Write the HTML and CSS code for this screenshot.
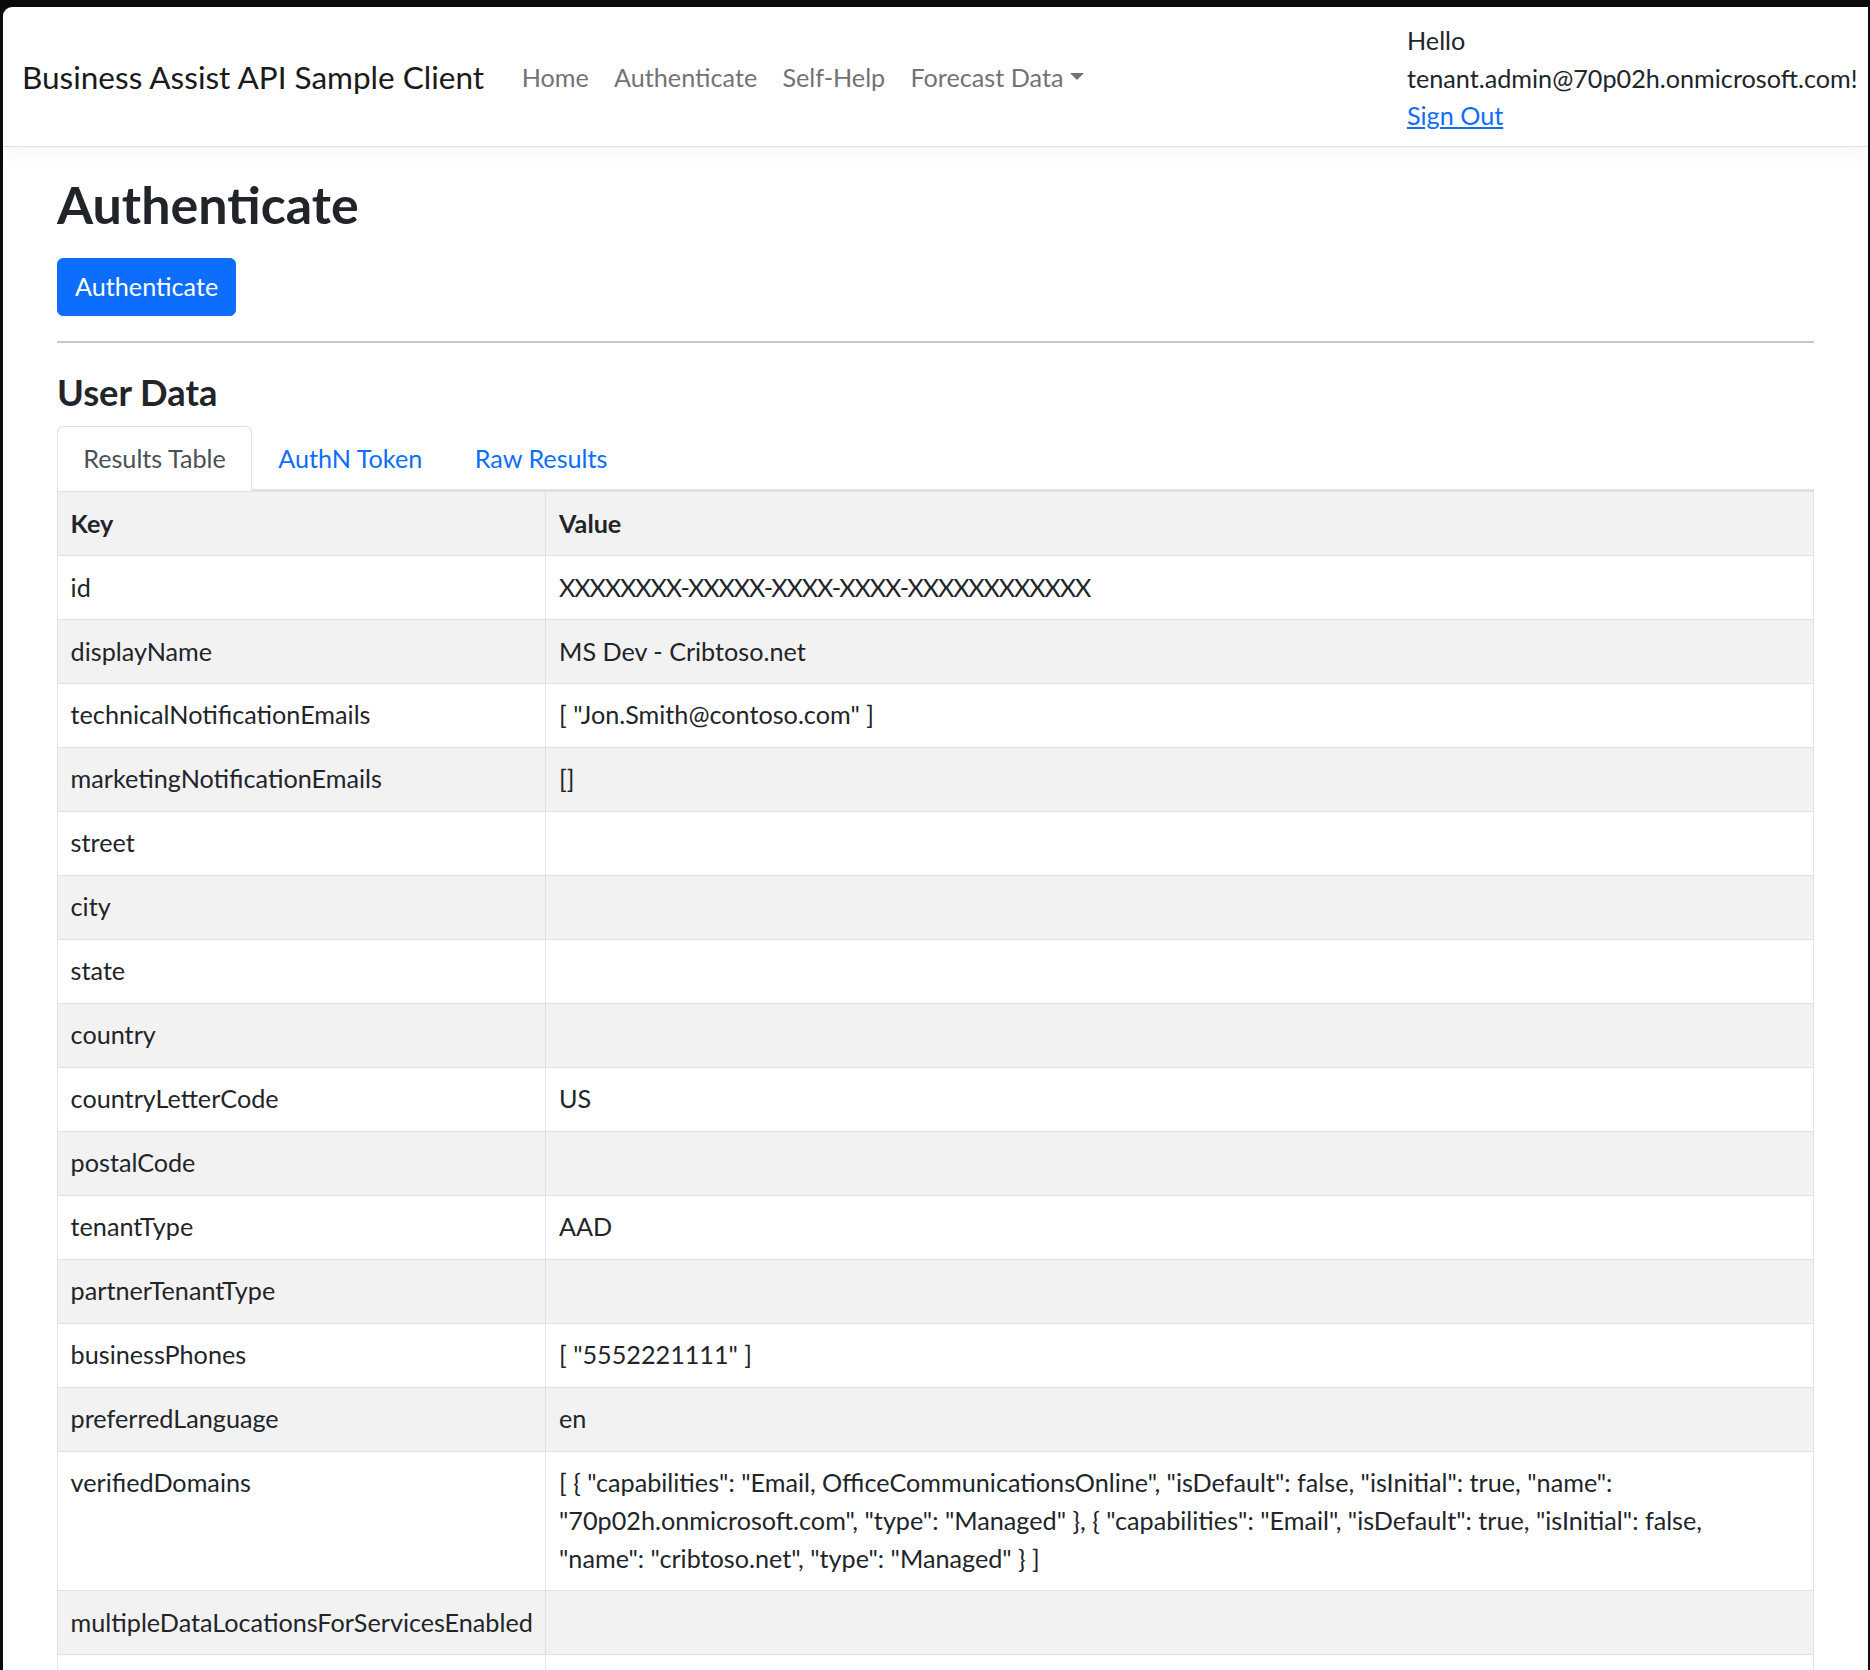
FILE: index.html
```html
<!DOCTYPE html>
<html lang="en">
<head>
<meta charset="utf-8">
<title>Authenticate - Business Assist API Sample Client</title>
<link rel="stylesheet" href="styles.css">
</head>
<body>
<div class="window">
  <header class="navbar">
    <a class="brand" href="#">Business Assist API Sample Client</a>
    <ul class="nav">
      <li><a class="nav-link" href="#">Home</a></li>
      <li><a class="nav-link" href="#">Authenticate</a></li>
      <li><a class="nav-link" href="#">Self-Help</a></li>
      <li><a class="nav-link dropdown-toggle" href="#">Forecast Data</a></li>
    </ul>
    <div class="user">
      <div>Hello</div>
      <div>tenant.admin@70p02h.onmicrosoft.com!</div>
      <a class="signout" href="#">Sign Out</a>
    </div>
  </header>
  <main class="content">
    <h1 class="page-title">Authenticate</h1>
    <button class="btn-primary" type="button">Authenticate</button>
    <hr class="divider">
    <h3 class="section-title">User Data</h3>
    <ul class="tabs">
      <li><a class="tab active" href="#">Results Table</a></li>
      <li><a class="tab" href="#">AuthN Token</a></li>
      <li><a class="tab" href="#">Raw Results</a></li>
    </ul>
    <table class="results">
      <thead>
        <tr><th class="key-col">Key</th><th>Value</th></tr>
      </thead>
      <tbody>
        <tr><td>id</td><td class="masked">XXXXXXXX-XXXXX-XXXX-XXXX-XXXXXXXXXXXX</td></tr>
        <tr><td>displayName</td><td>MS Dev - Cribtoso.net</td></tr>
        <tr><td>technicalNotificationEmails</td><td>[ "Jon.Smith@contoso.com" ]</td></tr>
        <tr><td>marketingNotificationEmails</td><td>[]</td></tr>
        <tr><td>street</td><td></td></tr>
        <tr><td>city</td><td></td></tr>
        <tr><td>state</td><td></td></tr>
        <tr><td>country</td><td></td></tr>
        <tr><td>countryLetterCode</td><td>US</td></tr>
        <tr><td>postalCode</td><td></td></tr>
        <tr><td>tenantType</td><td>AAD</td></tr>
        <tr><td>partnerTenantType</td><td></td></tr>
        <tr><td>businessPhones</td><td>[ "5552221111" ]</td></tr>
        <tr><td>preferredLanguage</td><td>en</td></tr>
        <tr><td>verifiedDomains</td><td>[ { "capabilities": "Email, OfficeCommunicationsOnline", "isDefault": false, "isInitial": true, "name":<br>"70p02h.onmicrosoft.com", "type": "Managed" }, { "capabilities": "Email", "isDefault": true, "isInitial": false,<br>"name": "cribtoso.net", "type": "Managed" } ]</td></tr>
        <tr><td>multipleDataLocationsForServicesEnabled</td><td></td></tr>
        <tr><td>&nbsp;</td><td></td></tr>
      </tbody>
    </table>
  </main>
</div>
</body>
</html>
```

FILE: styles.css
```css
html, body {
  margin: 0;
  padding: 0;
}

body {
  background: #0b0b0b;
  font-family: Lato, "Liberation Sans", Arial, sans-serif;
  font-size: 25.2px;
  line-height: 37.8px;
  color: #212529;
}

.window {
  margin: 7px 2px 0 3px;
  background: #ffffff;
  border-top-left-radius: 9px;
  min-height: 1663px;
  overflow: hidden;
}

.navbar {
  display: flex;
  align-items: center;
  height: 139px;
  padding-left: 19px;
  border-bottom: 1px solid #dedee8;
  box-shadow: 0 6px 18px rgba(0, 0, 0, 0.04);
}

.brand {
  font-size: 31.5px;
  color: #1a1a1a;
  text-decoration: none;
  margin-right: 25px;
  margin-top: 2px;
  white-space: nowrap;
}

.nav {
  display: flex;
  list-style: none;
  margin: 2px 0 0;
  padding: 0;
}

.nav-link {
  display: block;
  padding: 0 12.6px;
  color: #737373;
  text-decoration: none;
  white-space: nowrap;
}

.dropdown-toggle::after {
  content: "";
  display: inline-block;
  margin-left: 6.4px;
  vertical-align: 6.4px;
  border-top: 7.6px solid;
  border-right: 7.6px solid transparent;
  border-left: 7.6px solid transparent;
}

.user {
  margin-left: auto;
  width: 461px;
  padding-top: 4px;
  white-space: nowrap;
}

.signout {
  color: #0d6efd;
  text-decoration: underline;
}

.content {
  padding: 0 54px;
}

.page-title {
  font-size: 52px;
  line-height: 62px;
  font-weight: 700;
  margin: 25.6px 0 23.4px;
}

.btn-primary {
  display: block;
  font-family: inherit;
  font-size: 25.2px;
  line-height: 37.8px;
  color: #ffffff;
  background: #0d6efd;
  border: 1.6px solid #0d6efd;
  border-radius: 6px;
  padding: 8.6px 17px;
  height: 58px;
  cursor: pointer;
}

.divider {
  border: 0;
  border-top: 2px solid #c8c8c8;
  margin: 25px 0 28.2px;
}

.section-title {
  font-size: 36.3px;
  line-height: 43.6px;
  font-weight: 700;
  margin: 0 0 11.2px;
}

.tabs {
  display: flex;
  list-style: none;
  margin: 0;
  padding: 0;
  border-bottom: 2px solid #dee2e6;
}

.tab {
  display: block;
  margin-bottom: -2px;
  padding: 12.6px 25.2px;
  border: 1px solid transparent;
  border-top-left-radius: 6px;
  border-top-right-radius: 6px;
  color: #0d6efd;
  text-decoration: none;
  white-space: nowrap;
}

.tab.active {
  color: #495057;
  background: #ffffff;
  border-color: #dee2e6 #dee2e6 #ffffff;
}

.results {
  width: 100%;
  border-collapse: collapse;
  border: 1px solid #dee2e6;
}

.results th,
.results td {
  padding: 12.6px 12.6px;
  border: 1px solid #dee2e6;
  text-align: left;
  vertical-align: top;
}

.results th {
  font-weight: 700;
}

.key-col {
  width: 462px;
}

.masked {
  letter-spacing: -1.1px;
}

.results thead tr,
.results tbody tr:nth-child(even) {
  background: #f2f2f2;
}
```
